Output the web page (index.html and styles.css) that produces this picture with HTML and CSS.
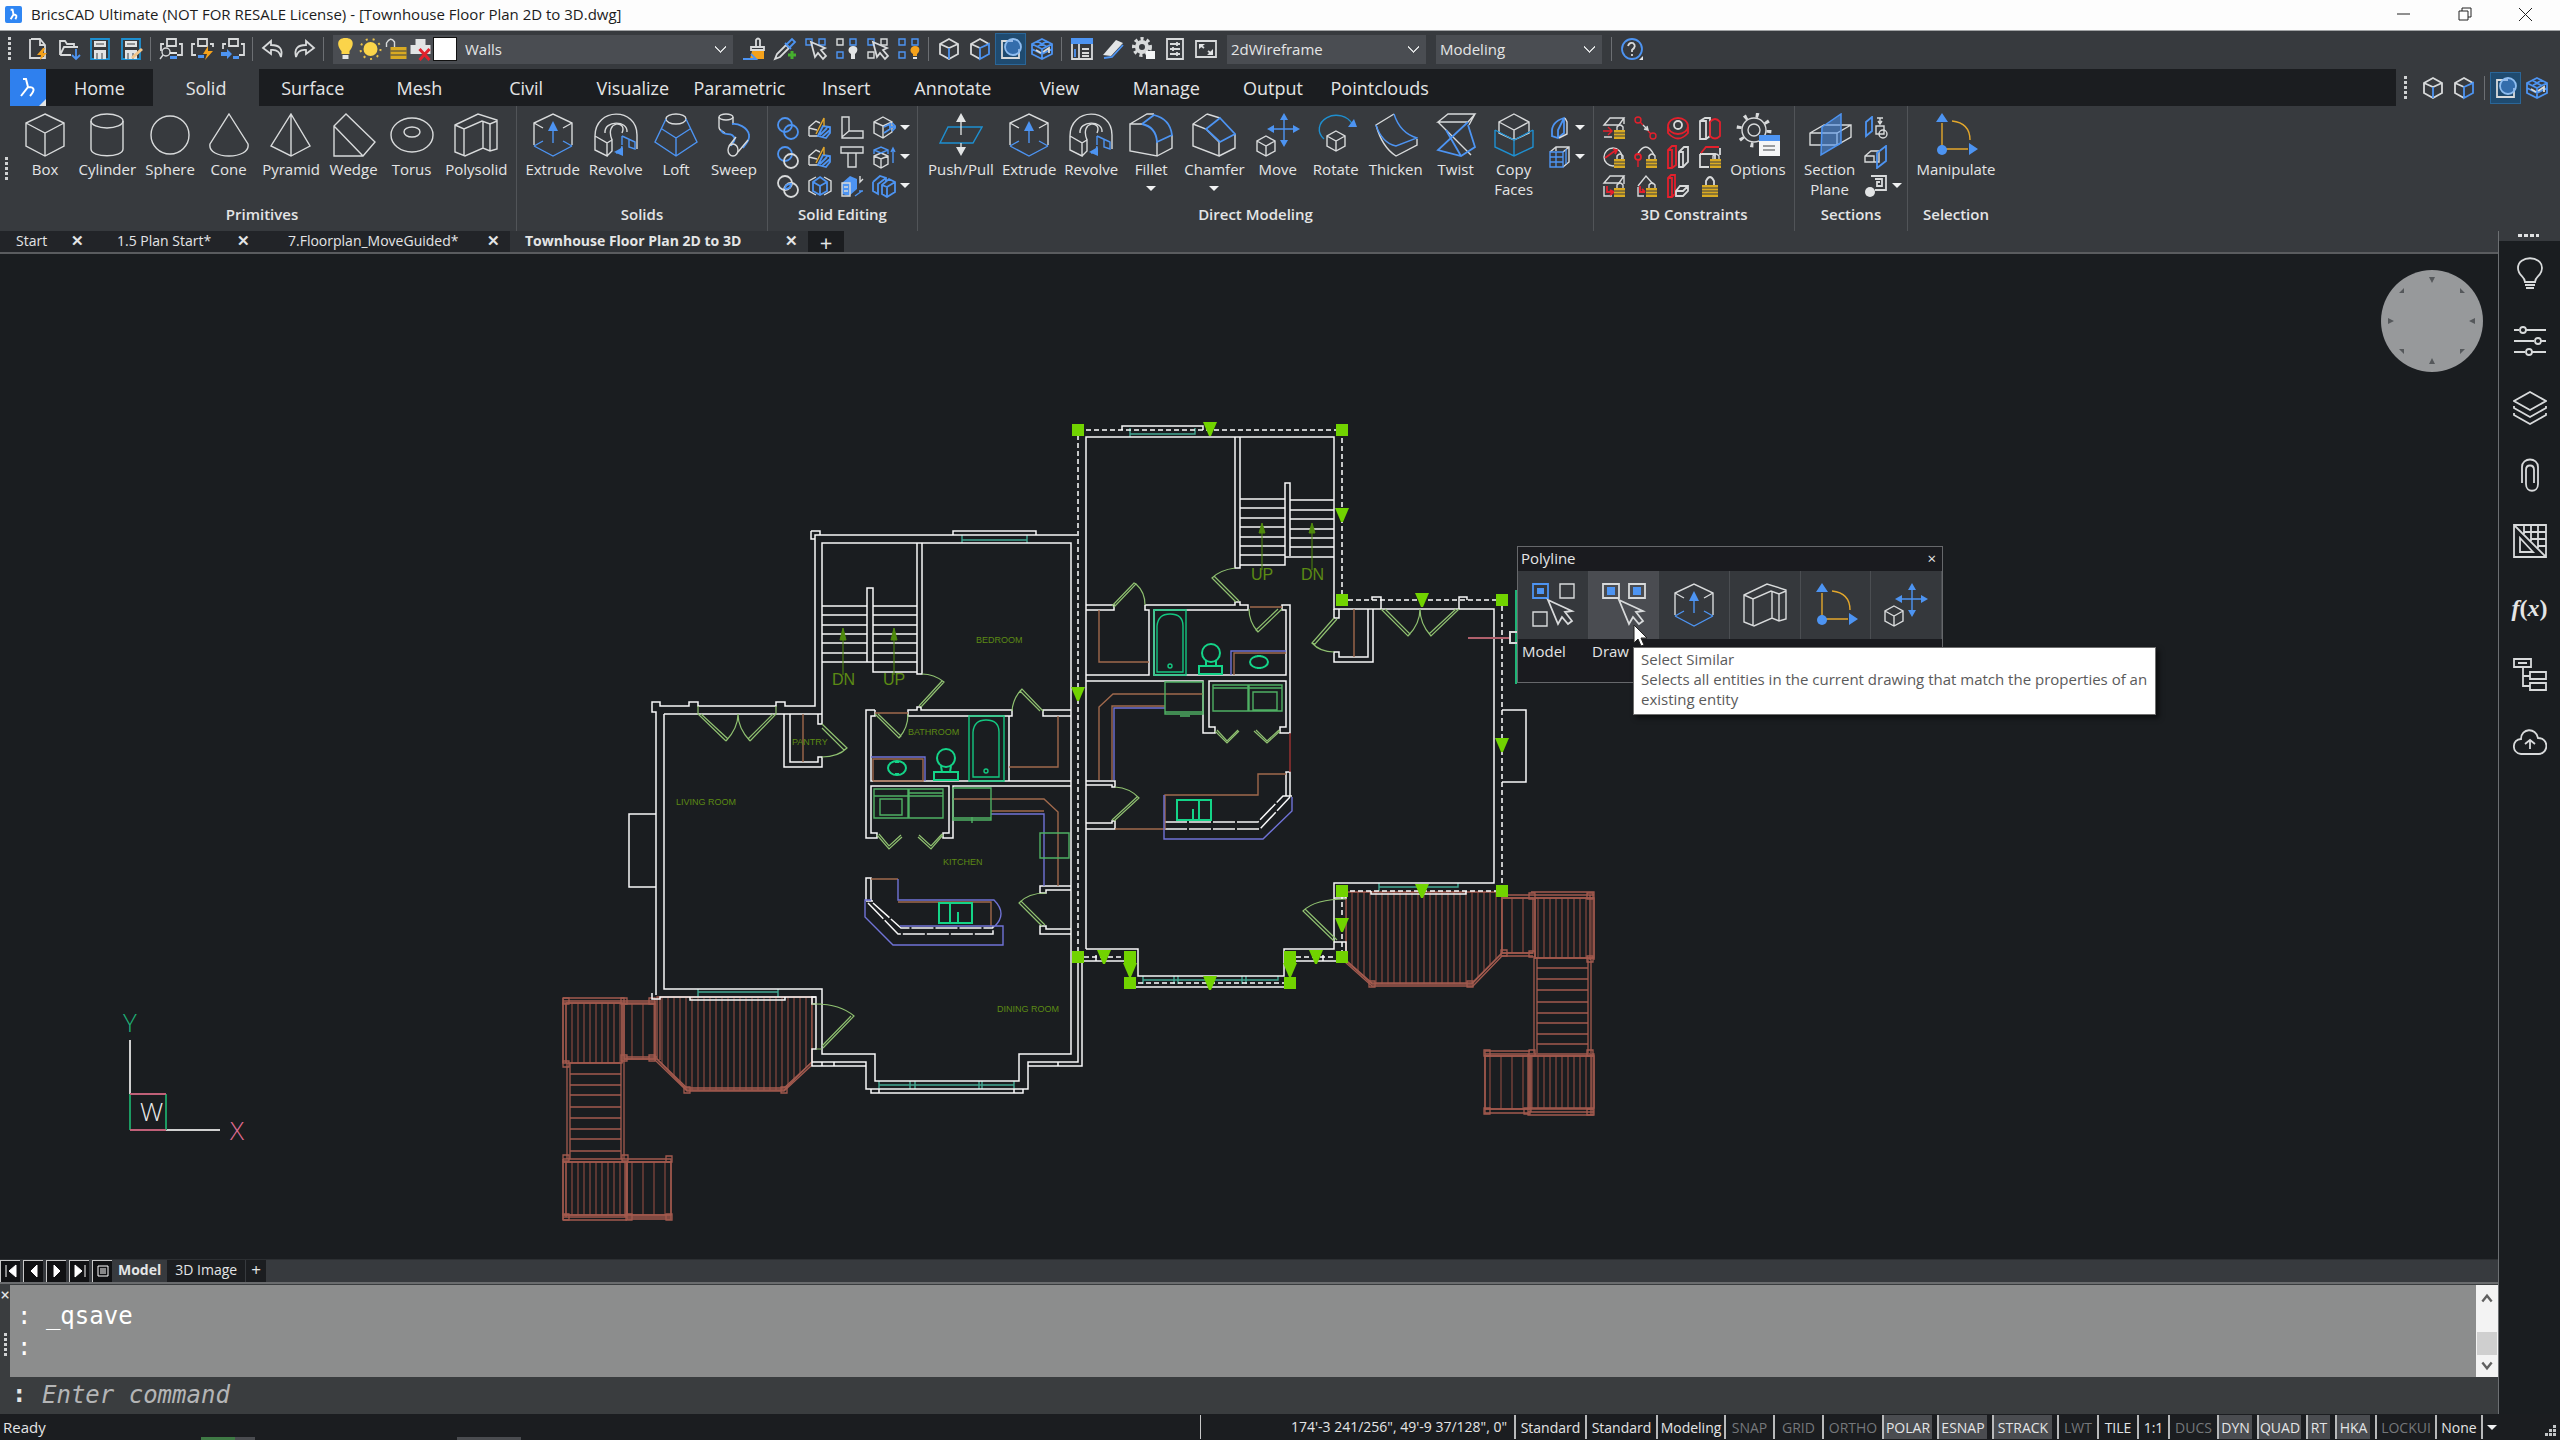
FILE: index.html
```html
<!DOCTYPE html>
<html lang="en">
<head>
<meta charset="utf-8">
<meta name="viewport" content="width=device-width, initial-scale=1">
<title>BricsCAD Ultimate</title>
<link rel="stylesheet" href="styles.css">
</head>
<body>

<!-- Icon sprite -->
<svg class="sprite" aria-hidden="true">
  <symbol id="box" viewBox="0 0 44 44"><path class="w" d="M22 1L41 10V33L22 43L3 33V10ZM3 10L22 20L41 10M22 20V43"/></symbol>
  <symbol id="cylinder" viewBox="0 0 44 44"><ellipse class="w" cx="22" cy="8" rx="16" ry="7"/><path class="w" d="M6 8V36C6 45 38 45 38 36V8"/></symbol>
  <symbol id="sphere" viewBox="0 0 44 44"><circle class="w" cx="22" cy="22" r="19"/></symbol>
  <symbol id="cone" viewBox="0 0 44 44"><path class="w" d="M22 1L41 31C44 47 0 47 3 31Z"/></symbol>
  <symbol id="pyramid" viewBox="0 0 44 44"><path class="w" d="M22 1L41 33L22 43L2 33ZM22 1V43"/></symbol>
  <symbol id="wedge" viewBox="0 0 44 44"><path class="w" d="M2 13L14 1L43 29L31 43H2ZM2 13L31 43"/></symbol>
  <symbol id="torus" viewBox="0 0 44 44"><ellipse class="w" cx="22" cy="22" rx="21" ry="17"/><ellipse class="w" cx="22" cy="19" rx="8" ry="5"/></symbol>
  <symbol id="polysolid" viewBox="0 0 44 44"><path class="w" d="M1 12L24 1L43 7V36L36 38L29 35L11 43L1 39ZM1 12L10 16L28 8L36 11L43 8M10 16V43M29 9V35M36 11V38"/></symbol>
  <symbol id="extrude" viewBox="0 0 44 44"><path class="w" d="M3 32V10L22 1L41 10V32M3 10L12 15M41 10L32 15"/><path class="b" d="M3 33L22 43L41 33M3 33L12 28M41 33L32 28M22 30V12"/><path class="bf" d="M22 8L27 18H17Z"/></symbol>
  <symbol id="revolve" viewBox="0 0 44 44"><path class="w" d="M1 23C1-6 43-6 43 22V36M1 23V37L13 43V30L1 23M13 30L18 27V38L13 43M18 27C10 7 34 7 28 20"/><path class="w" d="M11 20C10 7 34 7 33 19"/><path class="b" d="M28 23L41 29V36L35 34V26M28 23V32M28 33Q27 40 22 40"/><path class="bf" d="M20 39L29 34V43Z"/></symbol>
  <symbol id="loft" viewBox="0 0 44 44"><ellipse class="w" cx="22" cy="6" rx="10" ry="5"/><path class="b" d="M12 6L1 29L22 43L43 29L32 6M8 16L22 25L36 16M22 25V43"/></symbol>
  <symbol id="sweep" viewBox="0 0 44 44"><ellipse class="w" cx="14" cy="4" rx="7" ry="3"/><path class="w" d="M7 4V14C7 18 10 18 13 20M21 4V10"/><path class="b2" d="M9 17C11 23 17 20 20 22C26 26 20 30 19 33M20 11C25 10 36 14 37 22C38 28 34 30 31 35"/><ellipse class="w" cx="21" cy="37" rx="5" ry="6"/><path class="w" d="M17 33L24 24M26 39L36 27"/></symbol>
  <symbol id="pushpull" viewBox="0 0 44 44"><path class="c" d="M9 14H43L34 30H1Z"/><path class="w" d="M22 22V5M22 30V38"/><path class="wf" d="M22 0L27 9H17ZM22 43L27 34H17Z"/></symbol>
  <symbol id="fillet" viewBox="0 0 44 44"><path class="w" d="M13 11L1 11V38L28 43V29M1 11L18 1H25M28 43L43 35V22"/><path class="b2" d="M13 11L25 2Q41 6 43 22L28 29Q27 14 13 11"/></symbol>
  <symbol id="chamfer" viewBox="0 0 44 44"><path class="w" d="M15 1L1 11V33L27 43V29L14 16L1 11M15 1L28 5M27 43L43 35V21"/><path class="b2" d="M28 5L43 21L28 29L14 16Z"/></symbol>
  <symbol id="move" viewBox="0 0 44 44"><path class="b" d="M28 5V29M15 16H40"/><path class="bf" d="M28 0L32 7H24ZM28 34L32 27H24ZM11 16L18 12V20ZM44 16L37 12V20Z"/><path class="w" d="M10 23L19 28V38L10 43L1 38V28ZM1 28L10 33L19 28M10 33V43"/></symbol>
  <symbol id="rotate" viewBox="0 0 44 44"><path class="c" d="M10 26A17 14 0 1 1 38 11"/><path class="bf" d="M40 6L43 14H34Z"/><path class="w" d="M22 18L31 23V33L22 38L13 33V23ZM13 23L22 28L31 23M22 28V38"/></symbol>
  <symbol id="thicken" viewBox="0 0 44 44"><path class="w" d="M20 1L2 12Q8 34 22 43L43 32V26"/><path class="b" d="M20 1Q26 20 43 25L22 33Q8 30 2 12"/></symbol>
  <symbol id="twist" viewBox="0 0 44 44"><path class="w" d="M4 9L14 1H41L34 9ZM4 9L37 42M41 1L35 12"/><path class="b2" d="M34 9L4 37L27 43L41 34L34 12M12 17L27 43"/></symbol>
  <symbol id="copyfaces" viewBox="0 0 44 44"><path class="w" d="M22 1L37 9V20L22 27L7 20V9ZM7 9L22 17L37 9M22 17V27"/><path class="c" d="M3 17V34L22 43L41 34V17M3 17L22 27L41 17M22 27V43"/></symbol>
  <symbol id="options" viewBox="0 0 44 44"><circle class="w" cx="18" cy="17" r="6"/><circle class="w" cx="18" cy="17" r="12"/><circle class="gear" cx="18" cy="17" r="15"/><path class="paper" d="M23 23H44V43H23Z"/><path class="bf" d="M23 22H44V28H23Z"/><path class="ink" d="M27 33H39M27 37H39"/></symbol>
  <symbol id="section" viewBox="0 0 44 44"><path class="w" d="M2 20L16 12H43V24L29 32H2ZM2 20H29L43 12M29 20V32"/><path class="plane" d="M14 14L33 1V30L13 42Z"/></symbol>
  <symbol id="manipulate" viewBox="0 0 44 44"><path class="y" d="M8 34V10M8 36H34M18 8Q36 10 36 27"/><path class="bf" d="M8 0L14 9H2ZM44 36L35 30V42Z"/><circle class="bf" cx="8" cy="37" r="5"/></symbol>

  <symbol id="rings" viewBox="0 0 24 24"><circle class="b2" cx="9" cy="9" r="7"/><circle class="b2" cx="15" cy="16" r="7"/></symbol>
  <symbol id="rings2" viewBox="0 0 24 24"><circle class="b2" cx="9" cy="9" r="7"/><circle class="w2" cx="15" cy="16" r="7"/></symbol>
  <symbol id="rings3" viewBox="0 0 24 24"><circle class="w2" cx="9" cy="9" r="7"/><circle class="w2" cx="15" cy="16" r="7"/><path class="b2" d="M9 15Q9 10 15 10Q15 15 9 15"/></symbol>
  <symbol id="slice" viewBox="0 0 24 24"><path class="w" d="M1 20V11L8 5L12 7M1 12L9 14M1 20H10L12 16"/><path class="b2" d="M10 20L15 10L22 11V17L18 22ZM12 19L19 12M14 21L22 14"/><path class="y" d="M8 18L16 2V10"/></symbol>
  <symbol id="ell" viewBox="0 0 24 24"><path class="w" d="M2 1H9V15H23V22H2ZM2 21L9 15"/></symbol>
  <symbol id="tee" viewBox="0 0 24 24"><path class="w" d="M1 2H23V8H16V22H8V8H1ZM8 8H16"/></symbol>
  <symbol id="face" viewBox="0 0 24 24"><path class="w" d="M11 1L20 6V16L11 22L2 17V6ZM2 6L11 10L20 6M11 10V22"/><path class="b2" d="M12 11L18 8V13L12 17M18 11H23M20 7L24 11L20 15"/></symbol>
  <symbol id="faceup" viewBox="0 0 24 24"><path class="w" d="M9 8L16 11V19L9 23L2 19V11ZM2 11L9 14L16 11M9 14V23"/><path class="b" d="M2 9V5L9 2L16 5V9M2 5L9 8L16 5M21 18V4M19 7L21 3L23 7"/></symbol>
  <symbol id="fillbox" viewBox="0 0 24 24"><path class="bf" d="M2 9L10 2L17 5V15L9 22L2 20Z"/><path class="w" d="M2 9H10V22H2ZM4 13H8M4 17H8M20 2V8L23 5"/><path class="b" d="M15 22L22 17M19 17H23"/></symbol>
  <symbol id="hexcube" viewBox="0 0 24 24"><path class="w" d="M8 3L1 7V17L8 21M16 3L23 7V17L16 21"/><path class="b2" d="M12 3L19 8V17L12 21L5 17V8ZM5 8L12 12L19 8M12 12V21"/></symbol>
  <symbol id="ushape" viewBox="0 0 24 24"><path class="b2" d="M1 8L8 2L14 4V8M1 8V17L6 20V10L14 4M10 11L17 5L23 8V18L15 23L10 20ZM10 11L15 13L23 8M15 13V22"/></symbol>
  <symbol id="leaf" viewBox="0 0 24 24"><path class="b2" d="M5 17Q4 6 17 2V17L11 22L5 20ZM11 22V14L17 2"/><path class="w" d="M18 2L20 6V18L12 22"/></symbol>
  <symbol id="gridbox" viewBox="0 0 24 24"><path class="w" d="M3 7L9 2H22V17L16 22M9 2V6M16 7L22 2"/><path class="b" d="M3 7H16V22H3ZM3 12H16M3 17H16M9 7V22M19 4V19"/></symbol>
  <symbol id="lock" viewBox="0 0 24 24"><path class="w2" d="M8 11V7Q12 -1 16 7V11"/><path class="gold" d="M4 11H20V23H4Z"/><path class="ink" d="M4 14H20M4 17H20M4 20H20"/></symbol>
  <symbol id="minilock" viewBox="0 0 24 24"><path class="w" d="M15 14V11Q18 7 21 11V14"/><path class="gold" d="M12 14H23V23H12Z"/><path class="ink" d="M12 17H23M12 20H23"/></symbol>
  <symbol id="c1" viewBox="0 0 24 24"><path class="w" d="M2 9L8 2H22L17 9ZM2 9H17M22 2V8M2 21H10"/><path class="r" d="M1 15H10M6 11L10 15L6 19"/><use href="#minilock"/></symbol>
  <symbol id="c2" viewBox="0 0 24 24"><circle class="r" cx="4" cy="4" r="3"/><circle class="r" cx="19" cy="20" r="3"/><path class="r" d="M6 6L9 9M14 15L17 18"/><path class="w" d="M9 9L14 14M10 13L14 14L13 10"/></symbol>
  <symbol id="c3" viewBox="0 0 24 24"><ellipse class="r2" cx="12" cy="10" rx="10" ry="8"/><path class="r2" d="M2 11V17Q12 28 22 17V11"/><circle class="w2" cx="12" cy="9" r="4"/></symbol>
  <symbol id="c4" viewBox="0 0 24 24"><path class="w2" d="M2 5L7 2H12V20L8 23H2ZM2 5H8V22"/><path class="r2" d="M12 6Q17 0 22 6V20Q17 25 12 20Z"/></symbol>
  <symbol id="c5" viewBox="0 0 24 24"><circle class="w" cx="11" cy="12" r="9"/><path class="r2" d="M3 13L14 5M11 4L15 5L13 9"/><use href="#minilock"/></symbol>
  <symbol id="c6" viewBox="0 0 24 24"><path class="w" d="M3 10Q12 -6 20 10"/><circle class="r2" cx="4" cy="12" r="3"/><path class="r" d="M4 16V22"/><use href="#minilock"/></symbol>
  <symbol id="c7" viewBox="0 0 24 24"><path class="r2" d="M2 5L6 1H10V20L6 23H2ZM2 5H6V22"/><path class="w2" d="M13 7L18 2H22V17L17 22H13ZM13 7H17V22"/></symbol>
  <symbol id="c8" viewBox="0 0 24 24"><path class="w2" d="M2 9V22H11M2 9H17V14M22 3V10"/><path class="r2" d="M3 8L8 2H21"/><use href="#minilock"/></symbol>
  <symbol id="c9" viewBox="0 0 24 24"><path class="w" d="M2 9L8 2H22L17 9ZM22 2V10M2 12V22H10"/><path class="r2" d="M5 12V18H11M8 16L12 18L8 21"/><use href="#minilock"/></symbol>
  <symbol id="c10" viewBox="0 0 24 24"><path class="w" d="M4 12L12 2L19 10M4 13V22H10"/><path class="r2" d="M6 12V18H11M8 15L11 18"/><use href="#minilock"/></symbol>
  <symbol id="c11" viewBox="0 0 24 24"><path class="r2" d="M2 4L5 1H9V20L6 23H2ZM2 4H6V22"/><path class="w2" d="M10 17L14 12H22V17L17 22H10ZM10 17H17L22 12"/></symbol>
  <symbol id="s1" viewBox="0 0 24 24"><path class="b2" d="M2 6L8 1V15L2 20Z"/><path class="w" d="M12 10H20V18H12ZM16 2V7M14 5L16 8L18 5M13 2H19"/><circle class="w" cx="19" cy="18" r="4"/></symbol>
  <symbol id="s2" viewBox="0 0 24 24"><path class="w" d="M1 11L7 6H15V17H1ZM1 11H10V17"/><path class="b2" d="M13 8L22 1V16L13 23Z"/></symbol>
  <symbol id="s3" viewBox="0 0 24 24"><path class="w2" d="M7 2H22V16H11M11 5H18V12H13V8H16"/><circle class="wf" cx="6" cy="18" r="5"/></symbol>

  <symbol id="new" viewBox="0 0 24 24"><path class="w2" d="M5 2H14L19 8V21H4V2M14 2V8H19"/><path class="of" d="M17 11L11 18H15L14 23L21 16H17L19 11Z"/></symbol>
  <symbol id="open" viewBox="0 0 24 24"><path class="w2" d="M3 18V4H8L10 7H17V10M3 18L7 10H21M3 18H14"/><path class="b2" d="M19 12V21M15 18L19 22L23 18"/></symbol>
  <symbol id="save" viewBox="0 0 24 24"><path class="c2" d="M3 2H21V22H3Z"/><path class="wf" d="M6 4H18V10H6ZM6 13H18V22H6Z"/><path class="ink" d="M8 7H16M9 16V22M14 16V22"/></symbol>
  <symbol id="saveas" viewBox="0 0 24 24"><use href="#save"/><path class="pen" d="M13 21L23 12"/></symbol>
  <symbol id="print1" viewBox="0 0 24 24"><path class="w2" d="M8 9V2H17V9ZM5 7H2V14M20 7H23V18H18"/><circle class="w" cx="7" cy="15" r="4"/><path class="w" d="M4 18L1 22"/><path class="wf" d="M11 15H18V17H11Z"/><path class="bf" d="M11 19H18V22H11Z"/></symbol>
  <symbol id="print2" viewBox="0 0 24 24"><path class="w2" d="M8 9V2H17V9ZM5 7H2V18H6M20 7H23V10"/><path class="bf" d="M8 18H14V21H8Z"/><path class="of" d="M18 9L13 17H17L15 23L23 14H18Z"/></symbol>
  <symbol id="print3" viewBox="0 0 24 24"><path class="w2" d="M8 9V2H17V9ZM5 7H2V12M20 7H23V18H18"/><path class="bf" d="M12 19H18V22H12ZM0 15H6V12L11 17L6 22V19H0Z"/></symbol>
  <symbol id="undo" viewBox="0 0 24 24"><path class="w2" d="M10 4L2 11L10 17V13Q18 12 20 20Q23 8 10 8Z"/></symbol>
  <symbol id="redo" viewBox="0 0 24 24"><path class="w2" d="M14 4L22 11L14 17V13Q6 12 4 20Q1 8 14 8Z"/></symbol>
  <symbol id="bulb" viewBox="0 0 24 24"><path class="yf" d="M12 1C22 1 20 10 16 14V17H8V14C4 10 2 1 12 1Z"/><path class="wf" d="M9 18H15V22H9Z"/></symbol>
  <symbol id="sun" viewBox="0 0 24 24"><circle class="sunray" cx="12" cy="12" r="10"/><circle class="yf" cx="12" cy="12" r="7"/></symbol>
  <symbol id="unlock" viewBox="0 0 24 24"><path class="w" d="M3 10V6Q7 -1 11 5V10"/><path class="gold" d="M7 10H23V22H7Z"/><path class="ink" d="M7 14H23M7 18H23"/></symbol>
  <symbol id="noprint" viewBox="0 0 24 24"><path class="wf" d="M7 2H17V8H22V17H2V8H7Z"/><path class="r3" d="M11 12L21 23M21 12L11 23"/></symbol>
  <symbol id="brush" viewBox="0 0 24 24"><path class="w2" d="M14 10V3Q16 0 18 3V10M9 10H22V13H9Z"/><path class="of" d="M10 14H22V22H8Z"/><path class="b2" d="M1 22H14L9 17"/></symbol>
  <symbol id="dropper" viewBox="0 0 24 24"><path class="w2" d="M2 22L4 17L13 8L16 11L7 20Z"/><path class="b2" d="M12 6L18 12M14 7L19 2L22 5L17 10"/><path class="g2" d="M19 14V22M15 18H23"/></symbol>
  <symbol id="selectbox" viewBox="0 0 24 24"><path class="b" d="M2 2H8V8H2ZM15 2H21V8H15Z"/><path class="w2" d="M7 5L11 20L14 16L19 22L22 19L17 13L21 11Z"/></symbol>
  <symbol id="bulbgrey" viewBox="0 0 24 24"><path class="b" d="M2 15H8V21H2ZM15 2H21V8H15Z"/><path class="w" d="M2 2H8V8H2Z"/><path class="wf" d="M18 9C24 9 23 15 20 17V22H16V17C12 15 13 9 18 9Z"/></symbol>
  <symbol id="selectmix" viewBox="0 0 24 24"><path class="w" d="M15 2H21V8H15ZM2 15H8V21H2Z"/><path class="b" d="M2 2H8V8H2Z"/><path class="w2" d="M7 5L11 20L14 16L19 22L22 19L17 13L21 11Z"/></symbol>
  <symbol id="bulbon" viewBox="0 0 24 24"><path class="b" d="M2 15H8V21H2ZM15 2H21V8H15ZM2 2H8V8H2Z"/><path class="of" d="M18 9C24 9 23 15 20 17V19H16V17C12 15 13 9 18 9Z"/><path class="wf" d="M16 20H20V22H16Z"/></symbol>
  <symbol id="cube" viewBox="0 0 24 24"><path class="w2" d="M12 2L21 7V17L12 22L3 17V7ZM3 7L12 11L21 7"/><path class="b2" d="M12 11V22"/></symbol>
  <symbol id="cubeb" viewBox="0 0 24 24"><path class="w2" d="M12 22L3 17V7L12 2L21 7M3 7L12 11"/><path class="b2" d="M12 11L21 7V17L12 22Z"/></symbol>
  <symbol id="disc" viewBox="0 0 24 24"><path class="w2" d="M14 4H3V21H20V12"/><circle class="shade" cx="14" cy="10" r="8"/></symbol>
  <symbol id="cubes" viewBox="0 0 24 24"><path class="b2" d="M12 2L22 7V17L12 22L2 17V7ZM2 7L12 12L22 7M7 4L17 10M17 4L7 10M12 12V22M2 12L12 17L22 12"/><path class="w2" d="M13 15L19 11V16M6 13L11 16"/></symbol>
  <symbol id="table" viewBox="0 0 24 24"><path class="w2" d="M2 7V22H22V7M9 7V22M12 12H19M12 16H19M12 19H19"/><path class="b2" d="M5 12V20"/><path class="bf" d="M1 1H23V7H1Z"/></symbol>
  <symbol id="eraser" viewBox="0 0 24 24"><path class="wf" d="M2 18L15 3L22 6L10 19Z"/><path class="b2" d="M3 21L11 20L22 8"/></symbol>
  <symbol id="gear" viewBox="0 0 24 24"><circle class="gearteeth" cx="10" cy="10" r="8"/><circle class="gearcore" cx="10" cy="10" r="5"/><path class="paper" d="M14 14H23V22H14Z"/></symbol>
  <symbol id="sliders2" viewBox="0 0 24 24"><path class="w2" d="M4 2H20V22H4ZM7 7H17M7 12H17M7 17H17M14 5V9M10 10V14M14 15V19"/></symbol>
  <symbol id="expand" viewBox="0 0 24 24"><path class="w2" d="M2 4H22V20H2ZM10 11L6 8M14 14L18 17"/><path class="wf" d="M5 7H11L5 12ZM19 18H13L19 12Z"/></symbol>
  <symbol id="help" viewBox="0 0 24 24"><circle class="b2" cx="12" cy="12" r="10"/><path class="w2" d="M8 9Q9 5 13 6Q17 9 12 13V15M12 17V19"/><path class="wf" d="M23 23V19L19 23Z"/></symbol>

  <symbol id="p-bulb" viewBox="0 0 34 34"><path class="w2" d="M12 25C12 19 5 19 5 11C5-2 29-2 29 11C29 19 22 19 22 25ZM12 28H22M13 31H21"/></symbol>
  <symbol id="p-sliders" viewBox="0 0 34 34"><path class="w2" d="M1 6H6M13 6H33M1 17H21M28 17H33M1 28H12M19 28H33"/><circle class="w2" cx="10" cy="6" r="3"/><circle class="w2" cx="25" cy="17" r="3"/><circle class="w2" cx="16" cy="28" r="3"/></symbol>
  <symbol id="p-layers" viewBox="0 0 34 34"><path class="w2" d="M17 1L33 10L17 19L1 10ZM1 15V17L17 26L33 17V15M1 22V24L17 33L33 24V22"/></symbol>
  <symbol id="p-clip" viewBox="0 0 34 34"><path class="w2" d="M9 25V9C9-1 25-1 25 9V26C25 35 13 35 13 26V12C13 6 21 6 21 12V25"/></symbol>
  <symbol id="p-hatch" viewBox="0 0 34 34"><path class="w2" d="M1 1H33V33H1ZM1 1L33 33M7 14V28H20ZM11 1V10M18 1V17M25 1V24M11 8H33M18 15H33M25 22H33"/></symbol>
  <symbol id="p-tree" viewBox="0 0 34 34"><path class="w2" d="M1 1H18V9H1ZM5 5H14M17 14H33V21H17ZM17 25H33V32H17ZM10 9V28H17M10 18H17"/></symbol>
  <symbol id="p-cloud" viewBox="0 0 34 34"><path class="w2" d="M8 29C-2 28-1 14 8 14C8 3 23 2 25 13C36 13 36 28 26 29ZM17 24V15M12 19L17 15L22 19"/></symbol>
  <symbol id="q1" viewBox="0 0 44 44"><path class="b2" d="M2 1H17V15H2Z"/><path class="bf" d="M6 5H13V11H6Z"/><path class="w" d="M29 1H43V15H29ZM2 29H16V43H2Z"/><path class="w2" d="M17 17L27 41L31 34L37 41L41 38L34 29L41 28Z"/></symbol>
  <symbol id="q2" viewBox="0 0 44 44"><path class="w2" d="M1 1H17V15H1ZM27 1H43V15H27Z"/><path class="bf" d="M5 4H13V12H5ZM31 4H39V12H31Z"/><path class="w2" d="M17 17L27 41L31 34L37 41L41 38L34 29L41 28Z"/></symbol>
</svg>

<header class="titlebar">
  <svg class="appicon" viewBox="0 0 18 18"><rect class="logo" width="18" height="18" rx="2"/><path class="mark" d="M6 4H8L9 9L6 14M9 9Q14 9 11 14"/></svg>
  <h1>BricsCAD Ultimate (NOT FOR RESALE License) - [Townhouse Floor Plan 2D to 3D.dwg]</h1>
  <div class="winbtns">
    <button aria-label="Minimize"><svg viewBox="0 0 14 14"><path d="M0 7H13"/></svg></button>
    <button aria-label="Restore"><svg viewBox="0 0 14 14"><path d="M1 4H10V13H1ZM4 4V1H13V10H10"/></svg></button>
    <button aria-label="Close"><svg viewBox="0 0 14 14"><path d="M0 1L13 14M13 1L0 14"/></svg></button>
  </div>
</header>

<div class="quickbar">
  <i class="grip"></i>
  <button class="tool" aria-label="New"><svg><use href="#new"/></svg></button>
  <button class="tool" aria-label="Open"><svg><use href="#open"/></svg></button>
  <button class="tool" aria-label="Save"><svg><use href="#save"/></svg></button>
  <button class="tool" aria-label="Save as"><svg><use href="#saveas"/></svg></button>
  <i class="sep"></i>
  <button class="tool" aria-label="Print preview"><svg><use href="#print1"/></svg></button>
  <button class="tool" aria-label="Publish"><svg><use href="#print2"/></svg></button>
  <button class="tool" aria-label="Print"><svg><use href="#print3"/></svg></button>
  <i class="sep"></i>
  <button class="tool" aria-label="Undo"><svg><use href="#undo"/></svg></button>
  <button class="tool" aria-label="Redo"><svg><use href="#redo"/></svg></button>
  <i class="sep"></i>
  <div class="combo layer">
    <svg><use href="#bulb"/></svg><svg><use href="#sun"/></svg><svg><use href="#unlock"/></svg><svg><use href="#noprint"/></svg>
    <i class="swatch"></i>
    <select aria-label="Layer"><option>Walls</option></select>
  </div>
  <button class="tool" aria-label="Match properties"><svg><use href="#brush"/></svg></button>
  <button class="tool" aria-label="Pick color"><svg><use href="#dropper"/></svg></button>
  <button class="tool" aria-label="Select similar"><svg><use href="#selectbox"/></svg></button>
  <button class="tool" aria-label="Hide"><svg><use href="#bulbgrey"/></svg></button>
  <button class="tool" aria-label="Isolate"><svg><use href="#selectmix"/></svg></button>
  <button class="tool" aria-label="Show"><svg><use href="#bulbon"/></svg></button>
  <i class="sep"></i>
  <button class="tool" aria-label="Cube"><svg><use href="#cube"/></svg></button>
  <button class="tool" aria-label="Cube face"><svg><use href="#cubeb"/></svg></button>
  <button class="tool on" aria-label="Detect"><svg><use href="#disc"/></svg></button>
  <button class="tool" aria-label="Solids"><svg><use href="#cubes"/></svg></button>
  <i class="sep"></i>
  <button class="tool" aria-label="Explorer"><svg><use href="#table"/></svg></button>
  <button class="tool" aria-label="Purge"><svg><use href="#eraser"/></svg></button>
  <button class="tool" aria-label="Settings"><svg><use href="#gear"/></svg></button>
  <button class="tool" aria-label="Customize"><svg><use href="#sliders2"/></svg></button>
  <button class="tool" aria-label="Clean screen"><svg><use href="#expand"/></svg></button>
  <div class="combo style"><select aria-label="Visual style"><option>2dWireframe</option></select></div>
  <div class="combo space"><select aria-label="Workspace"><option>Modeling</option></select></div>
  <i class="sep"></i>
  <button class="tool" aria-label="Help"><svg><use href="#help"/></svg></button>
</div>

<div class="tabrow">
  <button class="appmenu" aria-label="Application menu"><svg viewBox="0 0 36 37"><path class="mark" d="M13 10H16L18 18L11 27M18 18Q28 18 20 27"/><path class="wf" d="M36 37V30L29 37Z"/></svg></button>
  <div class="tabstrip">
    <nav class="tabs">
      <button>Home</button><button class="active">Solid</button><button>Surface</button><button>Mesh</button><button>Civil</button><button>Visualize</button><button>Parametric</button><button>Insert</button><button>Annotate</button><button>View</button><button>Manage</button><button>Output</button><button>Pointclouds</button>
    </nav>
  </div>
  <div class="minibar">
    <i class="grip"></i>
    <button class="tool" aria-label="Cube"><svg><use href="#cube"/></svg></button>
    <button class="tool" aria-label="Cube face"><svg><use href="#cubeb"/></svg></button>
    <i class="sep"></i>
    <button class="tool on" aria-label="Detect"><svg><use href="#disc"/></svg></button>
    <button class="tool" aria-label="Solids"><svg><use href="#cubes"/></svg></button>
  </div>
</div>

<div class="ribbon">
  <i class="grip"></i>
  <section class="group primitives">
    <div class="items">
      <button class="big"><svg><use href="#box"/></svg>Box</button>
      <button class="big"><svg><use href="#cylinder"/></svg>Cylinder</button>
      <button class="big"><svg><use href="#sphere"/></svg>Sphere</button>
      <button class="big"><svg><use href="#cone"/></svg>Cone</button>
      <button class="big"><svg><use href="#pyramid"/></svg>Pyramid</button>
      <button class="big"><svg><use href="#wedge"/></svg>Wedge</button>
      <button class="big"><svg><use href="#torus"/></svg>Torus</button>
      <button class="big"><svg><use href="#polysolid"/></svg>Polysolid</button>
    </div>
    <h2>Primitives</h2>
  </section>
  <section class="group solids">
    <div class="items">
      <button class="big"><svg><use href="#extrude"/></svg>Extrude</button>
      <button class="big"><svg><use href="#revolve"/></svg>Revolve</button>
      <button class="big"><svg><use href="#loft"/></svg>Loft</button>
      <button class="big"><svg><use href="#sweep"/></svg>Sweep</button>
    </div>
    <h2>Solids</h2>
  </section>
  <section class="group editing">
    <div class="items">
      <div class="smalls four">
        <button aria-label="Union"><svg><use href="#rings"/></svg></button>
        <button aria-label="Slice"><svg><use href="#slice"/></svg></button>
        <button aria-label="L connect"><svg><use href="#ell"/></svg></button>
        <button aria-label="Move face"><svg><use href="#face"/></svg></button>
        <button aria-label="Subtract"><svg><use href="#rings2"/></svg></button>
        <button aria-label="Slice solid"><svg><use href="#slice"/></svg></button>
        <button aria-label="T connect"><svg><use href="#tee"/></svg></button>
        <button aria-label="Extrude face"><svg><use href="#faceup"/></svg></button>
        <button aria-label="Intersect"><svg><use href="#rings3"/></svg></button>
        <button aria-label="Interfere"><svg><use href="#hexcube"/></svg></button>
        <button aria-label="Convert"><svg><use href="#fillbox"/></svg></button>
        <button aria-label="Shell"><svg><use href="#ushape"/></svg></button>
      </div>
      <div class="arrows"><button class="arrow" aria-label="More face tools"></button><button class="arrow" aria-label="More extrude tools"></button><button class="arrow" aria-label="More shell tools"></button></div>
    </div>
    <h2>Solid Editing</h2>
  </section>
  <section class="group direct">
    <div class="items">
      <button class="big"><svg><use href="#pushpull"/></svg>Push/Pull</button>
      <button class="big"><svg><use href="#extrude"/></svg>Extrude</button>
      <button class="big"><svg><use href="#revolve"/></svg>Revolve</button>
      <button class="big more"><svg><use href="#fillet"/></svg>Fillet</button>
      <button class="big more"><svg><use href="#chamfer"/></svg>Chamfer</button>
      <button class="big"><svg><use href="#move"/></svg>Move</button>
      <button class="big"><svg><use href="#rotate"/></svg>Rotate</button>
      <button class="big"><svg><use href="#thicken"/></svg>Thicken</button>
      <button class="big"><svg><use href="#twist"/></svg>Twist</button>
      <button class="big"><svg><use href="#copyfaces"/></svg>Copy<br>Faces</button>
      <div class="smalls one">
        <button aria-label="Twist face"><svg><use href="#leaf"/></svg></button>
        <button aria-label="Stitch"><svg><use href="#gridbox"/></svg></button>
      </div>
      <div class="arrows"><button class="arrow" aria-label="More faces"></button><button class="arrow" aria-label="More stitch"></button></div>
    </div>
    <h2>Direct Modeling</h2>
  </section>
  <section class="group constraints">
    <div class="items">
      <div class="smalls four">
        <button aria-label="Distance"><svg><use href="#c1"/></svg></button>
        <button aria-label="Coincident"><svg><use href="#c2"/></svg></button>
        <button aria-label="Concentric"><svg><use href="#c3"/></svg></button>
        <button aria-label="Tangent"><svg><use href="#c4"/></svg></button>
        <button aria-label="Radius"><svg><use href="#c5"/></svg></button>
        <button aria-label="Angle"><svg><use href="#c6"/></svg></button>
        <button aria-label="Parallel"><svg><use href="#c7"/></svg></button>
        <button aria-label="Fix"><svg><use href="#c8"/></svg></button>
        <button aria-label="Rigid set"><svg><use href="#c9"/></svg></button>
        <button aria-label="Path"><svg><use href="#c10"/></svg></button>
        <button aria-label="Perpendicular"><svg><use href="#c11"/></svg></button>
        <button aria-label="Lock"><svg><use href="#lock"/></svg></button>
      </div>
      <button class="big"><svg><use href="#options"/></svg>Options</button>
    </div>
    <h2>3D Constraints</h2>
  </section>
  <section class="group sections">
    <div class="items">
      <button class="big"><svg><use href="#section"/></svg>Section<br>Plane</button>
      <div class="smalls one">
        <button aria-label="Section block"><svg><use href="#s1"/></svg></button>
        <button aria-label="Live section"><svg><use href="#s2"/></svg></button>
        <button aria-label="Base view"><svg><use href="#s3"/></svg></button>
      </div>
      <div class="arrows last"><button class="arrow" aria-label="More views"></button></div>
    </div>
    <h2>Sections</h2>
  </section>
  <section class="group selection">
    <div class="items">
      <button class="big"><svg><use href="#manipulate"/></svg>Manipulate</button>
    </div>
    <h2>Selection</h2>
  </section>
</div>

<div class="main">
  <div class="workspace">
    <div class="doctabs">
      <div class="doc d1"><span>Start</span><button aria-label="Close Start">✕</button></div>
      <div class="doc d2"><span>1.5 Plan Start*</span><button aria-label="Close 1.5 Plan Start">✕</button></div>
      <div class="doc d3"><span>7.Floorplan_MoveGuided*</span><button aria-label="Close 7.Floorplan">✕</button></div>
      <div class="doc d4 active"><span>Townhouse Floor Plan 2D to 3D</span><button aria-label="Close Townhouse">✕</button></div>
      <button class="adddoc" aria-label="New drawing">+</button>
    </div>

    <main class="canvas">
      <svg class="drawing" viewBox="0 254 2498 1005" preserveAspectRatio="xMidYMid slice">
        <defs>
          <pattern id="planks" width="6" height="40" patternUnits="userSpaceOnUse"><path class="deckline" d="M2 0V40"/></pattern>
          <pattern id="wide" width="11" height="40" patternUnits="userSpaceOnUse"><path class="deckline" d="M5 0V40"/></pattern>
          <path id="grip" d="M-6-6H6V6H-6Z"/>
          <path id="mid" d="M-7-7H7L1 7H-1Z"/>
          <path id="post" d="M-3-3H3V3H-3Z"/>
        </defs>

        <!-- Decks -->
        <g class="deck">
          <path fill="url(#planks)" d="M563 1003H622V1063H563ZM657 997H812V1062L784 1090H687L657 1059ZM563 1162H627V1215H563Z"/>
          <path fill="url(#wide)" d="M624 1004H655V1059H624ZM627 1162H671V1215H627Z"/>
          <path d="M563 998H624V1063M563 998V1063M566 1003V1063M563 1001H655M566 1003H655M622 1003V1063M655 1001V1059M624 1057H657M624 1059H657L687 1088H784L812 1062M655 1060L687 1091H784L812 1065M660 997V1060M567 1063V1159M570 1063V1159M621 1063V1159M624 1063V1159M563 1159V1220M566 1162V1217M563 1162H671M563 1159H671V1219M563 1215H671M563 1217H671M563 1220H627M627 1162V1220M625 1162V1217M671 1219H627"/>
          <path d="M570 1063H621M570 1074H621M570 1085H621M570 1095H621M570 1107H621M570 1118H621M570 1129H621M570 1139H621M570 1151H621"/>
          <path fill="url(#planks)" d="M1346 892H1502V953L1472 984H1372L1346 961ZM1535 898H1594V958H1535ZM1530 1056H1594V1108H1530Z"/>
          <path fill="url(#wide)" d="M1502 898H1533V953H1502ZM1485 1056H1529V1109H1485Z"/>
          <path d="M1531 892H1594V960M1502 895H1594M1502 898H1594M1535 898V958H1594M1590 895V960M1502 953H1533M1502 956H1533M1502 953L1472 983H1372L1347 961M1502 956L1473 986H1372L1345 962M1534 958V1053M1537 958V1053M1588 958V1053M1591 958V1053M1485 1051H1530M1485 1054H1594V1115H1528V1054M1485 1056H1594M1485 1051V1113H1528M1485 1109H1594M1528 1112H1594M1591 1054V1115M1531 1056V1112"/>
          <path d="M1537 968H1588M1537 979H1588M1537 990H1588M1537 1002H1588M1537 1013H1588M1537 1023H1588M1537 1034H1588M1537 1044H1588"/>
          <use href="#post" x="566" y="1001"/><use href="#post" x="624" y="1001"/><use href="#post" x="652" y="1001"/><use href="#post" x="566" y="1064"/><use href="#post" x="624" y="1058"/><use href="#post" x="652" y="1058"/><use href="#post" x="687" y="1090"/><use href="#post" x="784" y="1090"/><use href="#post" x="566" y="1158"/><use href="#post" x="625" y="1158"/><use href="#post" x="669" y="1159"/><use href="#post" x="566" y="1217"/><use href="#post" x="629" y="1217"/><use href="#post" x="669" y="1217"/>
          <use href="#post" x="1532" y="896"/><use href="#post" x="1590" y="896"/><use href="#post" x="1504" y="953"/><use href="#post" x="1532" y="954"/><use href="#post" x="1590" y="959"/><use href="#post" x="1372" y="984"/><use href="#post" x="1470" y="984"/><use href="#post" x="1487" y="1053"/><use href="#post" x="1532" y="1053"/><use href="#post" x="1590" y="1053"/><use href="#post" x="1487" y="1111"/><use href="#post" x="1527" y="1111"/><use href="#post" x="1590" y="1112"/>
        </g>

        <!-- Windows -->
        <g class="glass">
          <path d="M962 535V543M962 540H1027M1027 535V543M698 989V997M698 992H778M778 989V997M879 1081V1089M879 1085H1014M1014 1081V1089M910 1081V1089M915 1081V1089M979 1081V1089M982 1081V1089"/>
          <path d="M1130 428V437M1130 434H1195V428M1379 883V891M1379 887H1458V883M1143 976V984M1143 980H1278V976M1174 976V984M1178 976V984M1242 976V984M1246 976V984"/>
        </g>

        <!-- Walls, left unit -->
        <g class="wall">
          <path d="M811 531H820V535H1077M811 531V539H815V706H785V702H776V706H698V702H689V706H660V702H652V712H656V995M820 535H815V540M822 714V543H1071V710M664 714H822M664 714V989H822V1054H875V1081H1019V1054H1071V543M652 993V999H660V997H816M690 997V1000H785V997"/>
          <path d="M784 714V767H822V757H818V762H790V714M818 714V724H822V714"/>
          <path d="M867 662V588H873V672H917M917 543V674H922V543M822 606H867M822 615H867M822 625H867M822 634H867M822 643H867M822 653H867M822 662H917M873 606H917M873 615H917M873 625H917M873 634H917M873 643H917M873 653H917"/>
          <path d="M875 710H866V838H877V833H871V786H949V833H943V838H953V786H1071M875 710V716H871V781H1071M917 707H921V710H1012V716H908V710H917ZM1071 710H1043V716H1071M1009 716V781"/>
          <path d="M1071 886H1040V893H1046V890H1071M1071 934H1040V926H1046V929H1071M866 901V878H871V901M866 901H873"/>
          <path stroke-dasharray="22 2" d="M868 903L898 934H993V926M873 903L901 928H993"/>
          <path d="M1078 962V1062H1028V1089H866V1062H812M1082 962V1066H1028M866 1066H812V1049H816V997H812V1004H816M871 1089V1093H1023V1089M822 1066V1062M834 1066V1062M1058 1066V1062M656 814H629V887H656M879 1089V1093M1014 1089V1093"/>
          <path d="M953 535V531H1036V535"/>
        </g>

        <!-- Walls, right unit -->
        <g class="wall">
          <path d="M1086 949V437H1334V609H1494V883H1334V949H1284V976H1138V949H1086"/>
          <path d="M1334 609V618H1339V609M1373 609V662H1334V652H1339V657H1368V609M1372 600V597H1381V609M1459 609V597H1467V600M1502 710H1526V782H1502"/>
          <path d="M1122 430V426H1203V430M1235 437V568H1240V437M1285 556V483H1290V556M1240 499H1285M1240 508H1285M1240 518H1285M1240 527H1285M1240 537H1285M1240 546H1285M1240 555H1285M1240 565H1285V556M1290 500H1334M1290 510H1334M1290 519H1334M1290 529H1334M1290 538H1334M1290 547H1334M1285 557H1334"/>
          <path d="M1086 605H1114V610H1086M1145 605H1235V602H1240V605H1248V610H1154V675H1286V610H1282V605H1290V733H1280V727H1286V681H1209V727H1215V733H1203V681H1086M1145 605V610H1149V675H1086"/>
          <path d="M1086 781H1115V787H1112V785H1086M1086 829H1115V821H1112V823H1086M1286 796V772H1290V796"/>
          <path stroke-dasharray="22 2" d="M1165 822H1258L1283 796H1292M1165 829H1260L1290 797"/>
          <path d="M1334 898H1346V891M1334 942H1346V961H1290M1078 961H1134M1130 987H1290M1371 891V894H1466V891M1096 961V955M1323 961V955"/>
        </g>

        <!-- Cabinets -->
        <g class="cab">
          <path d="M803 714V762M875 713H908M1058 716V767H1009M873 781V759H923V781H873M953 799H1044L1058 812V886M991 811H1044M871 879H898M898 902H991V926"/>
          <path d="M1354 609V657M1250 607H1282M1099 610V662H1149M1234 675V653H1286M1203 694H1113L1099 707V780M1165 706H1112V780M1115 829H1165V795H1258V774H1286"/>
          <path class="red" d="M1290 733V772"/>
        </g>
        <g class="counter">
          <path d="M871 757H925V781M991 814H1044V886M898 879V900H994Q1008 914 994 927M900 926H1003V945H893L865 917V900H871"/>
          <path d="M1231 675V651H1286M1165 708H1114V780M1164 795V839H1263L1292 811V797"/>
        </g>
        <g class="appl">
          <path d="M874 789H908V818H874ZM880 799H902V815H880ZM874 796H908M909 789H943V818H909ZM909 793H943M909 796H943M953 788H991V820H953ZM953 818H991M972 817V823M1040 833H1069V858H1040Z"/>
          <path d="M1213 685H1248V711H1213ZM1213 688H1282V711H1249V685H1282V688M1253 692H1277V710H1253ZM1165 682H1203V714H1165ZM1165 712H1203M1180 716H1190"/>
        </g>
        <g class="fixture">
          <path d="M969 716H1004V781H969ZM973 777V732Q974 720 986 720Q999 720 999 732V777ZM1154 610H1186V675H1154ZM1157 672V626Q1158 614 1170 614Q1183 614 1183 626V672Z"/>
          <g class="thick">
            <ellipse cx="897" cy="768" rx="9" ry="7"/><circle cx="946" cy="758" r="9"/><path d="M934 772H958V780H934ZM941 766L942 772M951 766L950 772M939 903H972V923H939ZM950 903V923M958 923V912M895 762H899M895 774H899"/>
            <ellipse cx="1259" cy="662" rx="9" ry="6"/><circle cx="1211" cy="653" r="9"/><path d="M1199 666H1222V674H1199ZM1206 660V666M1216 660V666M1177 800H1211V820H1177ZM1199 800V820M1193 820V809M1257 656H1261M1257 668H1261"/>
          </g>
          <circle cx="986" cy="771" r="2"/><circle cx="1170" cy="666" r="2"/>
        </g>

        <!-- Doors -->
        <g class="door">
          <path d="M698 706V714L726 741M701 714L728 739M726 741Q738 728 738 714Q738 728 750 741M776 706V714L750 741M773 714L748 739M822 724L847 748L844 750L822 728M847 748Q838 757 822 757M922 674Q934 674 944 682L921 707M942 681L919 706M875 714L899 738L901 736L878 714M899 738Q908 728 908 714M1043 711L1022 689L1020 691L1040 711M1022 689Q1013 698 1012 711M877 835L889 849L902 837M879 834L889 846L901 835M918 837L931 849L943 835M919 835L931 846L942 834M1042 926L1019 903L1021 901L1045 925M1019 903Q1028 893 1046 893M816 1004Q840 1004 854 1016L823 1048M851 1016L822 1046M812 1004H822M816 1049H822"/>
          <path d="M1381 609L1408 636L1410 634L1385 609M1408 636Q1420 624 1420 609Q1420 624 1431 636L1459 609M1429 634L1456 609M1334 618L1312 643L1315 644L1337 619M1312 643Q1320 652 1334 652M1235 568Q1220 570 1212 578L1236 602M1214 576L1239 601M1114 607L1136 584L1134 583L1112 606M1136 584Q1145 592 1145 605M1282 609L1258 632L1256 630L1278 609M1258 632Q1249 622 1249 609M1215 731L1227 743L1239 731M1217 730L1227 741L1238 730M1254 731L1267 743L1280 731M1256 730L1267 741L1279 730M1115 787Q1130 788 1139 798L1114 821M1137 797L1112 820M1346 899Q1315 899 1303 911L1334 941M1305 909L1337 940"/>
        </g>

        <!-- Stair arrows and room names -->
        <g class="notes">
          <path d="M843 675V630M840 640L843 628L846 640ZM894 675V630M891 640L894 628L897 640ZM1262 570V525M1259 533L1262 523L1265 533ZM1312 570V525M1309 533L1312 523L1315 533Z"/>
          <text class="dir" x="832" y="685">DN</text><text class="dir" x="883" y="685">UP</text>
          <text class="dir" x="1251" y="580">UP</text><text class="dir" x="1301" y="580">DN</text>
          <text x="976" y="643">BEDROOM</text><text x="908" y="735">BATHROOM</text><text x="792" y="745">PANTRY</text>
          <text x="676" y="805">LIVING ROOM</text><text x="943" y="865">KITCHEN</text><text x="997" y="1012">DINING ROOM</text>
        </g>

        <!-- Selected polyline with grips -->
        <path class="picked" d="M1078 430H1342V600H1502V891H1342V957H1290V983H1130V957H1078Z"/>
        <g class="grips">
          <use href="#grip" x="1078" y="430"/><use href="#grip" x="1342" y="430"/><use href="#grip" x="1342" y="600"/><use href="#grip" x="1502" y="600"/><use href="#grip" x="1502" y="891"/><use href="#grip" x="1342" y="891"/><use href="#grip" x="1342" y="957"/><use href="#grip" x="1290" y="957"/><use href="#grip" x="1290" y="983"/><use href="#grip" x="1130" y="983"/><use href="#grip" x="1130" y="957"/><use href="#grip" x="1078" y="957"/>
          <use href="#mid" x="1210" y="429"/><use href="#mid" x="1342" y="515"/><use href="#mid" x="1422" y="600"/><use href="#mid" x="1502" y="745"/><use href="#mid" x="1422" y="891"/><use href="#mid" x="1342" y="925"/><use href="#mid" x="1316" y="957"/><use href="#mid" x="1290" y="970"/><use href="#mid" x="1210" y="983"/><use href="#mid" x="1130" y="970"/><use href="#mid" x="1104" y="957"/><use href="#mid" x="1078" y="694"/>
        </g>

        <!-- Crosshair -->
        <path class="crossx" d="M1468 638H1510"/><path class="crossy" d="M1516 590V684"/><path class="crossbox" d="M1510 632H1518V643H1510Z"/>

        <!-- UCS icon -->
        <g class="ucs">
          <path class="axis" d="M130 1040V1094M166 1130H220"/>
          <path class="gy" d="M130 1094V1130M166 1094V1130"/><path class="rx" d="M130 1094H166M130 1130H166"/>
          <text class="ty" x="123" y="1032">Y</text><text class="tw" x="140" y="1121">W</text><text class="tx" x="230" y="1140">X</text>
        </g>

        <!-- View disc -->
        <circle class="disc" cx="2432" cy="321" r="51"/>
        <path class="ticks" d="M2429 277H2435L2432 283ZM2429 364H2435L2432 358ZM2388 318V324L2394 321ZM2475 318V324L2469 321ZM2399 293L2404 288V293ZM2465 293L2460 288V293ZM2399 349L2404 354V349ZM2465 349L2460 354V349Z"/>
      </svg>

      <div class="quad">
        <div class="quadtitle">Polyline<button aria-label="Close">×</button></div>
        <div class="quadtools">
          <button aria-label="Select"><svg><use href="#q1"/></svg></button>
          <button class="hover" aria-label="Select similar"><svg><use href="#q2"/></svg></button>
          <button aria-label="Extrude"><svg><use href="#extrude"/></svg></button>
          <button aria-label="Polysolid"><svg><use href="#polysolid"/></svg></button>
          <button aria-label="Manipulate"><svg><use href="#manipulate"/></svg></button>
          <button aria-label="Move"><svg><use href="#move"/></svg></button>
        </div>
        <div class="quadtabs"><span>Model</span><span>Draw</span></div>
      </div>
      <div class="tip" role="tooltip">
        <p>Select Similar</p>
        <p>Selects all entities in the current drawing that match the properties of an existing entity</p>
      </div>
      <svg class="cursor" viewBox="0 0 15 24"><path d="M1 1V19L5 15L8 22L11 21L8 14H14Z"/></svg>
    </main>

    <div class="layouttabs">
      <button class="nav" aria-label="First"><svg viewBox="0 0 12 14"><path d="M1 1V13M11 1L4 7L11 13Z"/></svg></button>
      <button class="nav" aria-label="Previous"><svg viewBox="0 0 12 14"><path d="M9 1L3 7L9 13Z"/></svg></button>
      <button class="nav" aria-label="Next"><svg viewBox="0 0 12 14"><path d="M3 1L9 7L3 13Z"/></svg></button>
      <button class="nav" aria-label="Last"><svg viewBox="0 0 12 14"><path d="M11 1V13M1 1L8 7L1 13Z"/></svg></button>
      <button class="nav line" aria-label="List"><svg viewBox="0 0 12 14"><path d="M1 2H11V12H1ZM3 5H9M3 7H9M3 9H9"/></svg></button>
      <button class="lay active">Model</button>
      <button class="lay">3D Image</button>
      <button class="lay add" aria-label="Add layout">+</button>
    </div>

    <div class="command">
      <div class="cmdside"><button aria-label="Close command line">×</button><i class="grip"></i></div>
      <div class="history"><pre>: _qsave
:</pre><div class="scroll"><svg viewBox="0 0 12 8"><path d="M2 7L6 2L10 7"/></svg><i></i><svg viewBox="0 0 12 8"><path d="M2 1L6 6L10 1"/></svg></div></div>
      <label class="entry"><b>:</b><input type="text" placeholder="Enter command"></label>
    </div>
  </div>

  <aside class="panels">
    <button aria-label="Tips"><svg><use href="#p-bulb"/></svg></button>
    <button aria-label="Properties"><svg><use href="#p-sliders"/></svg></button>
    <button aria-label="Layers"><svg><use href="#p-layers"/></svg></button>
    <button aria-label="Attachments"><svg><use href="#p-clip"/></svg></button>
    <button aria-label="Sheets"><svg><use href="#p-hatch"/></svg></button>
    <button class="fx"><em>f</em>(<em>x</em>)</button>
    <button aria-label="Structure"><svg><use href="#p-tree"/></svg></button>
    <button aria-label="Cloud"><svg><use href="#p-cloud"/></svg></button>
    <i class="handle"></i>
  </aside>
</div>

<footer class="status">
  <span class="ready">Ready</span>
  <span class="coords">174'-3 241/256", 49'-9 37/128", 0"</span>
  <button class="s71">Standard</button><button class="s71">Standard</button><button class="s68">Modeling</button>
  <button class="s50 off">SNAP</button><button class="s50 off">GRID</button><button class="s60 off">ORTHO</button>
  <button class="s56 set">POLAR</button><button class="s56 set">ESNAP</button><button class="s65 set">STRACK</button>
  <button class="s40 off">LWT</button><button class="s40">TILE</button><button class="s32">1:1</button>
  <button class="s50 off">DUCS</button><button class="s40 set">DYN</button><button class="s50 set">QUAD</button>
  <button class="s28 set">RT</button><button class="s40 set">HKA</button><button class="s60 off">LOCKUI</button>
  <button class="s46">None</button><button class="s20 more" aria-label="Status menu"><i></i></button>
  <svg class="resize" viewBox="0 0 12 12"><path d="M8 0H11V3H8ZM4 4H7V7H4ZM8 4H11V7H8ZM0 8H3V11H0ZM4 8H7V11H4ZM8 8H11V11H8Z"/></svg>
</footer>

</body>
</html>
```
FILE: styles.css
```css
* {
    box-sizing: border-box;
}

body {
    margin: 0;
    height: 100vh;
    display: flex;
    flex-direction: column;
    overflow: hidden;
    background-color: #1a1d20;
    color: #e4e5e6;
    font-family: "Open Sans", "Noto Sans", sans-serif;
    font-size: 14px;
}

button, select, input {
    font: inherit;
    color: inherit;
    background: none;
    border: none;
    padding: 0;
    margin: 0;
}

h1, h2, p, pre {
    margin: 0;
    font-weight: normal;
}

svg {
    display: block;
}

.sprite {
    position: absolute;
    width: 0;
    height: 0;
}

/* Icon strokes and fills */
.w, .w2, .b, .b2, .c, .c2, .r, .r2, .r3, .y, .g2, .mark {
    fill: none;
    stroke-width: 1.4;
}
.w, .w2 { stroke: #d8dadb; }
.b, .b2 { stroke: #4d94f2; }
.c, .c2 { stroke: #1e8fd0; }
.r, .r2, .r3 { stroke: #e3202c; }
.y { stroke: #e3a72c; }
.g2 { stroke: #46b02e; }
.w2, .b2, .c2, .r2 { stroke-width: 1.8; }
.r3, .g2 { stroke-width: 3; }
.wf { fill: #e2e4e5; }
.bf { fill: #4d94f2; }
.of { fill: #f5a21b; }
.yf { fill: #fbd44a; }
.gold { fill: #d9aa22; }
.paper { fill: #f4f5f6; }
.ink { fill: none; stroke: #3c4045; stroke-width: 1; }
.plane { fill: #4d94f288; stroke: #4d94f2; stroke-width: 1.5; }
.shade { fill: #4d94f277; stroke: #8fbdf0; stroke-width: 1.8; }
.gear { fill: none; stroke: #d8dadb; stroke-width: 5; stroke-dasharray: 3 9; }
.gearteeth { fill: none; stroke: #d8dadb; stroke-width: 4; stroke-dasharray: 3 3; }
.gearcore { fill: none; stroke: #d8dadb; stroke-width: 4; }
.sunray { fill: none; stroke: #e8c04a; stroke-width: 2; stroke-dasharray: 2 5; }
.pen { stroke: #f0c48a; stroke-width: 3; }
.mark { stroke: #fff; stroke-width: 2; }
.logo { fill: #2f86f3; }

/* Title bar */
.titlebar {
    height: 31px;
    flex: none;
    display: flex;
    align-items: center;
    padding: 0 4px 2px 5px;
    background-color: #fdfdfd;
    border-bottom: 1px solid #a2a4a6;
    color: #1c1c1c;
}

.appicon {
    width: 17px;
    height: 17px;
    margin-right: 9px;
}

.titlebar h1 {
    flex: 1;
    font-size: 15px;
}

.winbtns {
    display: flex;
}

.winbtns button {
    width: 61px;
    display: flex;
    justify-content: center;
}

.winbtns svg {
    width: 14px;
    height: 14px;
    fill: none;
    stroke: #222;
}

/* Quick access bar */
.quickbar {
    height: 38px;
    flex: none;
    display: flex;
    align-items: center;
    background-color: #373a3e;
    padding: 0 0 2px 8px;
}

.grip {
    width: 3px;
    height: 24px;
    background-image: repeating-linear-gradient(#d0d2d3 0 3px, transparent 3px 5px);
}

.quickbar > .grip {
    margin-right: 11px;
}

.tool {
    width: 31px;
    height: 32px;
    display: flex;
    align-items: center;
    justify-content: center;
}

.tool svg {
    width: 24px;
    height: 24px;
}

.tool.on {
    background-color: #1f4b70;
    border: 1px solid #2a6698;
}

.sep {
    width: 1px;
    height: 24px;
    margin: 0 4px;
    background-color: #6c6f73;
}

.combo {
    display: flex;
    align-items: center;
    height: 29px;
    background-color: #4a4d52;
}

.combo svg {
    width: 25px;
    height: 24px;
}

.combo select {
    flex: 1;
    height: 29px;
    font-size: 15px;
    padding-left: 4px;
    appearance: none;
    background-image: linear-gradient(45deg, transparent 45%, #d8dadb 45% 58%, transparent 58%), linear-gradient(-45deg, transparent 45%, #d8dadb 45% 58%, transparent 58%);
    background-size: 6px 7px;
    background-position: right 12px center, right 7px center;
    background-repeat: no-repeat;
}

.layer {
    width: 400px;
    margin: 0 5px;
}

.swatch {
    width: 24px;
    height: 24px;
    background-color: #fff;
    border: 1px solid #111;
    margin: 0 4px 0 0;
}

.style {
    width: 199px;
    margin: 0 10px 0 6px;
}

.space {
    width: 166px;
    margin-right: 5px;
}

/* Ribbon tabs */
.tabrow {
    height: 37px;
    flex: none;
    display: flex;
    background-color: #373a3e;
    padding-left: 10px;
}

.appmenu {
    width: 36px;
    background-color: #2f80ee;
}

.tabstrip {
    flex: 1;
    background-color: #1b1d20;
}

.tabs {
    display: grid;
    grid-template-columns: repeat(13, 1fr);
    width: 1387px;
    height: 37px;
    font-size: 18px;
}

.tabs .active {
    background-color: #373a3e;
}

.minibar {
    width: 164px;
    display: flex;
    align-items: center;
    padding-left: 8px;
}

.minibar .grip {
    margin-right: 10px;
}

.minibar .sep {
    margin: 0 5px;
}

/* Ribbon */
.ribbon {
    height: 125px;
    flex: none;
    display: flex;
    background-color: #373a3e;
    padding-left: 5px;
}

.ribbon > .grip {
    align-self: center;
}

.group {
    display: flex;
    flex-direction: column;
    border-right: 1px solid #515458;
    padding: 7px 0;
}

.group:last-child {
    border-right: none;
}

.group h2 {
    margin-top: auto;
    text-align: center;
    font-size: 15px;
    font-weight: 600;
    line-height: 20px;
}

.items {
    display: flex;
    padding: 0 4px;
}

.primitives .items {
    padding-left: 8px;
}

.primitives { width: 509px; }
.solids { width: 251px; }
.editing { width: 150px; }
.direct { width: 676px; }
.constraints { width: 201px; }
.sections { width: 113px; }
.selection { width: 96px; }

.big {
    display: flex;
    flex-direction: column;
    align-items: center;
    min-width: 58px;
    padding: 0 5px;
    font-size: 15px;
    line-height: 20px;
}

.direct .items {
    padding-left: 6px;
}

.direct .big {
    padding: 0 4px;
}

.big svg {
    width: 44px;
    height: 44px;
    margin-bottom: 2px;
}

.big.more::after, .arrow::after, .status .more i {
    content: "";
    border: 5px solid transparent;
    border-top-color: #f0f1f2;
    border-bottom: none;
}

.big.more::after {
    margin-top: 7px;
}

.smalls {
    display: grid;
    grid-auto-rows: 29px;
    align-content: start;
}

.four {
    grid-template-columns: repeat(4, 32px);
}

.one {
    grid-template-columns: 32px;
}

.smalls svg {
    width: 24px;
    height: 24px;
    margin: auto;
}

.arrows {
    display: flex;
    flex-direction: column;
}

.arrow {
    width: 10px;
    height: 29px;
    display: flex;
    align-items: center;
}

.arrows.last {
    padding-top: 58px;
}

/* Workspace */
.main {
    flex: 1;
    min-height: 0;
    display: flex;
    background-color: #373a3e;
}

.workspace {
    flex: 1;
    min-width: 0;
    display: flex;
    flex-direction: column;
    border-right: 1px solid #6c6f72;
}

.doctabs {
    height: 23px;
    flex: none;
    display: flex;
    border-bottom: 2px solid #5a5c5f;
    font-size: 14px;
}

.doc {
    display: flex;
    align-items: center;
    justify-content: space-between;
    padding: 0 10px 2px 16px;
    background-color: #222428;
}

.doc button {
    font-size: 15px;
    width: 14px;
    line-height: 19px;
    font-weight: bold;
}

.d1 { width: 94px; }
.d2 { width: 166px; padding-left: 23px; }
.d3 { width: 250px; padding-left: 28px; }
.d4 { width: 298px; padding-left: 15px; }

.doc.active {
    background-color: #303337;
    font-weight: bold;
}

.adddoc {
    width: 36px;
    line-height: 18px;
    font-size: 22px;
    background-color: #1b1d20;
}

.canvas {
    flex: 1;
    min-height: 0;
    position: relative;
    background-color: #1a1d20;
}

.drawing {
    width: 100%;
    height: 100%;
}

.wall, .cab, .counter, .appl, .fixture, .door, .glass {
    fill: none;
    stroke-width: 1.4;
}

.wall { stroke: #f8f8f8; stroke-width: 1.5; }
.cab { stroke: #a0694c; }
.cab .red { stroke: #a03434; }
.counter { stroke: #7073d6; }
.appl { stroke: #4fb063; }
.fixture { stroke: #14c780; }
.fixture .thick { stroke: #14d488; stroke-width: 2; }
.glass { stroke: #43a893; }
.door { stroke: #8fc070; stroke-width: 1.2; }

.deck {
    stroke: #a35a4e;
    fill: none;
    stroke-width: 1.3;
}

.deckline {
    stroke: #9c5044;
}

.notes path {
    stroke: #4f8a0c;
    fill: #4f8a0c;
}

.notes text {
    fill: #5c8a14;
    font-family: "Liberation Sans", sans-serif;
    font-size: 9px;
}

.notes .dir {
    font-size: 16px;
}

.picked {
    fill: none;
    stroke: #fff;
    stroke-width: 1.5;
    stroke-dasharray: 5 3;
}

.grips {
    fill: #71d300;
}

.crossx { stroke: #b0606c; stroke-width: 2; }
.crossy { stroke: #1fb577; stroke-width: 2; }
.crossbox { fill: none; stroke: #d8d8d8; stroke-width: 2; }

.ucs path { fill: none; stroke-width: 2; }
.ucs .axis { stroke: #d0d0d0; }
.ucs .gy { stroke: #1c9a62; }
.ucs .rx { stroke: #c06078; }
.ucs text { font-size: 26px; font-weight: 300; }
.ty { fill: #1fae76; }
.tx { fill: #e06c92; }
.tw { fill: #ececec; }
.disc { fill: #97999b; }
.ticks { fill: #55585b; }

/* Quad menu, floats on the drawing at the cursor */
.quad {
    position: absolute;
    left: 1517px;
    top: 292px;
    width: 426px;
    height: 137px;
    background-color: #1a1b1f;
    border: 1px solid #66686b;
    font-size: 15px;
}

.quadtitle {
    display: flex;
    justify-content: space-between;
    line-height: 22px;
    padding: 0 6px 2px 3px;
}

.quadtitle button {
    line-height: 18px;
}

.quadtools {
    display: flex;
    height: 68px;
    background-color: #35383c;
}

.quadtools button {
    flex: 1;
    border-right: 1px solid #4b4e52;
}

.quadtools .hover {
    background-color: #4a4c51;
}

.quadtools svg {
    width: 44px;
    height: 44px;
    margin: auto;
}

.quadtabs {
    display: flex;
    line-height: 25px;
}

.quadtabs span {
    width: 70px;
    padding-left: 4px;
}

.tip {
    position: absolute;
    left: 1633px;
    top: 393px;
    width: 523px;
    padding: 1px 7px 5px;
    background-color: #fff;
    border: 1px solid #6e6e6e;
    box-shadow: 3px 3px 5px #0008;
    color: #5a5a5a;
    font-size: 15px;
    line-height: 20px;
}

.cursor {
    position: absolute;
    left: 1633px;
    top: 370px;
    width: 15px;
    height: 24px;
    fill: #fff;
    stroke: #222;
}

/* Layout tabs */
.layouttabs {
    height: 25px;
    flex: none;
    display: flex;
    background-color: #373a3e;
    border-top: 1px solid #2c2f32;
    border-bottom: 2px solid #6a6c6e;
    font-size: 14px;
}

.nav {
    width: 20px;
    margin-right: 3px;
    background-color: #101113;
    border-top: 1px solid #c8c8c8;
    border-left: 1px solid #c8c8c8;
}

.nav svg {
    width: 12px;
    height: 14px;
    margin: 2px auto 4px;
    fill: #fff;
    stroke: #fff;
}

.nav.line svg {
    fill: none;
}

.lay {
    background-color: #1b1d20;
    padding: 0 8px 2px;
    margin-right: 1px;
    line-height: 20px;
}

.lay.active {
    background-color: #373a3e;
    font-weight: bold;
    padding: 0 5px 2px 3px;
}

.lay.add {
    padding: 0 5px 2px;
    font-size: 17px;
}

/* Command line */
.command {
    flex: none;
    display: grid;
    grid-template-columns: 10px 1fr;
    grid-template-rows: 92px 37px;
    background-color: #3a3d3f;
    padding-top: 1px;
    font-family: "DejaVu Sans Mono", monospace;
    font-size: 24px;
}

.cmdside {
    display: flex;
    flex-direction: column;
    justify-content: space-between;
    align-items: center;
    padding-bottom: 20px;
}

.cmdside button {
    font-size: 16px;
    line-height: 20px;
}

.history {
    display: flex;
    background-color: #8c8d8d;
    color: #fff;
}

.history pre {
    flex: 1;
    padding: 16px 7px;
    font-family: inherit;
    line-height: 31px;
}

.scroll {
    width: 22px;
    display: flex;
    flex-direction: column;
    align-items: center;
    background-color: #f3f3f3;
    padding: 8px 0 6px;
}

.scroll svg {
    width: 14px;
    height: 10px;
    fill: none;
    stroke: #606060;
    stroke-width: 2;
}

.scroll i {
    width: 20px;
    height: 23px;
    background-color: #cfcfcf;
    margin: auto 0 6px;
}

.entry {
    grid-column: 1 / 3;
    display: flex;
    padding-left: 12px;
}

.entry b {
    width: 30px;
    line-height: 35px;
}

.entry input {
    flex: 1;
    height: 36px;
    font-style: italic;
    outline: none;
}

.entry input::placeholder {
    color: #b4b5b6;
}

/* Right panel strip */
.panels {
    position: relative;
    width: 61px;
    flex: none;
    display: grid;
    grid-template-rows: repeat(8, 1fr);
    border-top: 10px solid #373a3e;
    background-color: #1a1d20;
    padding-bottom: 639px;
    padding-bottom: calc(100vh - 801px);
}

.panels svg {
    width: 34px;
    height: 34px;
    margin: auto;
}

/* Drag handle on the strip's top edge */
.handle {
    position: absolute;
    top: -7px;
    left: 19px;
    width: 21px;
    height: 3px;
    background-image: repeating-linear-gradient(90deg, #e0e1e2 0 4px, transparent 4px 6px);
}

.fx {
    font-family: "Liberation Serif", serif;
    font-size: 24px;
    font-weight: bold;
}

/* Status bar */
.status {
    height: 26px;
    flex: none;
    display: flex;
    align-items: center;
    padding-right: 3px;
    background-color: #1b1d20;
    background-image: linear-gradient(#3f7a45, #3f7a45), linear-gradient(#4a4c50, #4a4c50), linear-gradient(#4a4c50, #4a4c50);
    background-repeat: no-repeat;
    background-size: 34px 3px, 20px 3px, 64px 3px;
    background-position: 201px bottom, 235px bottom, 457px bottom;
    font-size: 14px;
}

.ready {
    flex: 1;
    padding-left: 3px;
    font-size: 15px;
}

.coords {
    width: 314px;
    padding-right: 7px;
    border-left: 1px solid #c8c8c8;
    text-align: right;
    line-height: 24px;
}

.status button {
    height: 24px;
    border-left: 2px solid #b8b9ba;
    white-space: nowrap;
}

.status .off {
    color: #75787b;
}

.status .set {
    background-color: #4a4c50;
    background-clip: padding-box;
    border-right: 5px solid transparent;
}

.s71 { width: 71px; }
.s68 { width: 68px; }
.s65 { width: 65px; }
.s60 { width: 60px; }
.s56 { width: 55px; }
.s50 { width: 49px; }
.s46 { width: 46px; }
.s40 { width: 40px; }
.s32 { width: 31px; }
.s28 { width: 29px; }
.s20 { width: 20px; }

.status .more {
    display: flex;
    justify-content: center;
    align-items: center;
}

.resize {
    width: 12px;
    height: 12px;
    margin: 8px 0 0 44px;
    fill: #c4c6c8;
}
```
